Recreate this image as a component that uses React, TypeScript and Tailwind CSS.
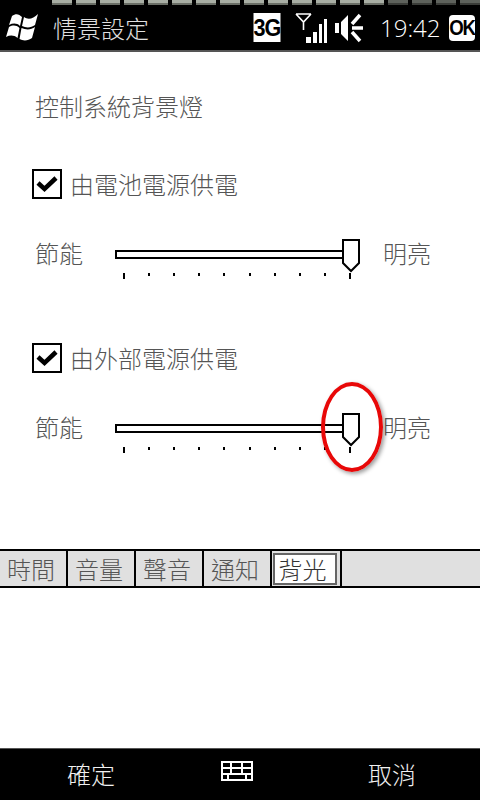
const CJK = "font-['Noto_Sans_CJK_TC',sans-serif]";

function Strip() {
  const items = Array.from({ length: 18 }, (_, i) => i);
  return (
    <div className="flex h-[5px] pl-[52px] gap-[4px] overflow-hidden">
      {items.map((i) => (
        <div
          key={i}
          className={
            i < 14
              ? "w-[20px] shrink-0 bg-[#a8aea4] border-b-[2px] border-[#6a6e66]"
              : "w-[20px] shrink-0 bg-[#5e625c] border-b-[2px] border-[#3a3c38]"
          }
        />
      ))}
    </div>
  );
}

function WinLogo() {
  return (
    <svg width="34" height="30" viewBox="0 0 34 30" className="shrink-0 ml-[1px] mt-[-1px]">
      <path d="M7 4 C11 1 14 2 17 5 L15 14 C12 11 8 11 4 13 Z" fill="#fff" />
      <path d="M19 5 C23 8 28 7 33 2 L30 13 C26 16 21 16 17 14 Z" fill="#fff" />
      <path d="M4 15 C8 13 11 13 14.500 16 L12.500 26 C9 23 5 23 1 25 Z" fill="#fff" />
      <path d="M16.500 16 C21 18 26 18 30 15 L27 26 C23 29 18 29 14.500 27 Z" fill="#fff" />
    </svg>
  );
}

function Signal() {
  return (
    <svg width="36" height="32" viewBox="0 0 36 32" className="shrink-0">
      <path d="M3 2 H18 M3 2 L10.500 10 L18 2 M10.500 10 V18" stroke="#fff" strokeWidth="1.600" fill="none" />
      <rect x="13" y="25" width="5" height="6" fill="#fff" />
      <rect x="20" y="20" width="4" height="11" fill="#fff" />
      <rect x="26" y="12" width="3" height="19" fill="#fff" />
      <rect x="31" y="7" width="3" height="24" fill="#fff" />
    </svg>
  );
}

function Speaker() {
  return (
    <svg width="30" height="30" viewBox="0 0 30 30" className="shrink-0">
      <path d="M1 10 H5 V20 H1 Z M7 9 L14 2 V28 L7 21 Z" fill="#fff" />
      <path d="M26 2 L18 11 M18 15 H29 M18 19 L26 28" stroke="#fff" strokeWidth="3.500" fill="none" />
    </svg>
  );
}

function Keyboard() {
  return (
    <svg width="32" height="20" viewBox="0 0 32 20" className="block">
      <path
        d="M1 1 H31 V19 H1 Z M1 7 H31 M1 13 H31 M10 1 V7 M21 1 V7 M10 7 V13 M21 7 V13 M7 13 V19 M25 13 V19"
        stroke="#fff"
        strokeWidth="2"
        fill="none"
      />
    </svg>
  );
}

function Thumb() {
  return (
    <svg width="18" height="34" viewBox="0 0 18 34" className="absolute left-[227px] top-[-11px]">
      <path d="M1 1 H17 V24 L9 32 L1 24 Z" fill="#fff" stroke="#000" strokeWidth="2" />
    </svg>
  );
}

function Slider() {
  const ticks = Array.from({ length: 10 }, (_, i) => i);
  return (
    <div className="flex items-start h-[50px]">
      <span className="w-[80px] shrink-0 text-[24px] leading-[34px] text-[#555] mt-[-3px] font-light">節能</span>
      <div className="w-[269px] shrink-0 pt-[11px]">
        <div className="relative">
          <div className="w-[232px] h-[9px] border-2 border-black bg-white" />
          <Thumb />
        </div>
        <div className="flex justify-between items-start w-[228px] ml-[8px] mt-[14px]">
          {ticks.map((i) => (
            <div key={i} className={i === 0 || i === 9 ? "w-[2px] h-[6px] bg-black" : "w-[2px] h-[3px] bg-black"} />
          ))}
        </div>
      </div>
      <span className="text-[24px] leading-[34px] text-[#555] mt-[-3px] ml-[-1px] font-light">明亮</span>
    </div>
  );
}

function Check({ label }: { label: string }) {
  return (
    <div className="flex items-center gap-[8px] h-[30px]">
      <div className="w-[30px] h-[30px] border-2 border-black flex items-center justify-center shrink-0">
        <svg width="22" height="18" viewBox="0 0 22 18">
          <path d="M2 8 L8.500 14 L20 3" stroke="#000" strokeWidth="4.500" fill="none" />
        </svg>
      </div>
      <span className="text-[24px] leading-[30px] text-[#555] font-light">{label}</span>
    </div>
  );
}

function Tab({ label, active }: { label: string; active?: boolean }) {
  return active ? (
    <div className="w-[68px] shrink-0 bg-[#e0e0e0] pt-[2px] pl-[1px] pb-[1px] pr-0">
      <div className="w-[64px] h-[32px] bg-white border-2 border-[#666] flex items-center justify-center text-[24px] leading-none text-[#333] font-light pr-[5px]">
        {label}
      </div>
    </div>
  ) : (
    <div className="w-[68px] shrink-0 bg-[#e0e0e0] border-r-2 border-black flex items-center justify-center text-[24px] leading-none text-[#555] font-light pr-[4px]">
      {label}
    </div>
  );
}

export default function App() {
  return (
    <div className={`relative w-[480px] h-[800px] bg-white overflow-hidden flex flex-col ${CJK}`}>
      <header className="h-[52px] shrink-0 bg-black border-b-[2px] border-[#555] flex flex-col">
        <Strip />
        <div className="flex-1 flex items-center pl-[4px] pr-[4px]">
          <WinLogo />
          <span className="ml-[14px] text-[24px] leading-none text-[#e0e0e0] w-[199px] shrink-0 font-light">情景設定</span>
          <div className="w-[30px] h-[29px] bg-white text-black flex items-center justify-center text-[24px] font-bold leading-none font-['Liberation_Sans',sans-serif] shrink-0 tracking-[-1px] scale-x-90">
            3G
          </div>
          <div className="ml-[11px]">
            <Signal />
          </div>
          <div className="ml-[5px]">
            <Speaker />
          </div>
          <span className="ml-[16px] w-[60px] shrink-0 text-[24px] leading-none text-white font-['Open_Sans',sans-serif] font-light">
            19:42
          </span>
          <div className="ml-[9px] w-[26px] h-[26px] rounded-[4px] bg-white text-black flex items-center justify-center text-[22px] font-bold leading-none font-['Liberation_Sans',sans-serif] tracking-[-1.500px] shrink-0 overflow-hidden">
            <span className="scale-x-85">OK</span>
          </div>
        </div>
      </header>

      <main className="flex-1 flex flex-col pl-[35px] pt-[37px]">
        <p className="text-[24px] leading-[34px] text-[#555] font-light">控制系統背景燈</p>
        <div className="mt-[46px] ml-[-3px]">
          <Check label="由電池電源供電" />
        </div>
        <div className="mt-[40px]">
          <Slider />
        </div>
        <div className="mt-[54px] ml-[-3px]">
          <Check label="由外部電源供電" />
        </div>
        <div className="mt-[40px]">
          <Slider />
        </div>
      </main>

      <nav className="absolute left-0 top-[549px] w-[480px] h-[39px] flex border-y-2 border-black bg-[#e0e0e0]">
        <Tab label="時間" />
        <Tab label="音量" />
        <Tab label="聲音" />
        <Tab label="通知" />
        <Tab label="背光" active />
        <div className="flex-1 border-l-2 border-black" />
      </nav>

      <footer className="h-[52px] shrink-0 bg-black border-t border-[#555] flex items-center text-[24px] leading-none text-[#f0f0f0] font-light">
        <span className="w-[180px] pl-[67px] shrink-0 mt-[-2px]">確定</span>
        <div className="w-[188px] shrink-0 pl-[41px] pb-[8px]">
          <Keyboard />
        </div>
        <span className="mt-[-2px]">取消</span>
      </footer>

      <div className="absolute left-[321px] top-[382px] w-[62px] h-[90px] rounded-[50%] border-[4px] border-[#e80808] shadow-[2px_2px_4px_rgba(0,0,0,0.4)]" />
    </div>
  );
}
